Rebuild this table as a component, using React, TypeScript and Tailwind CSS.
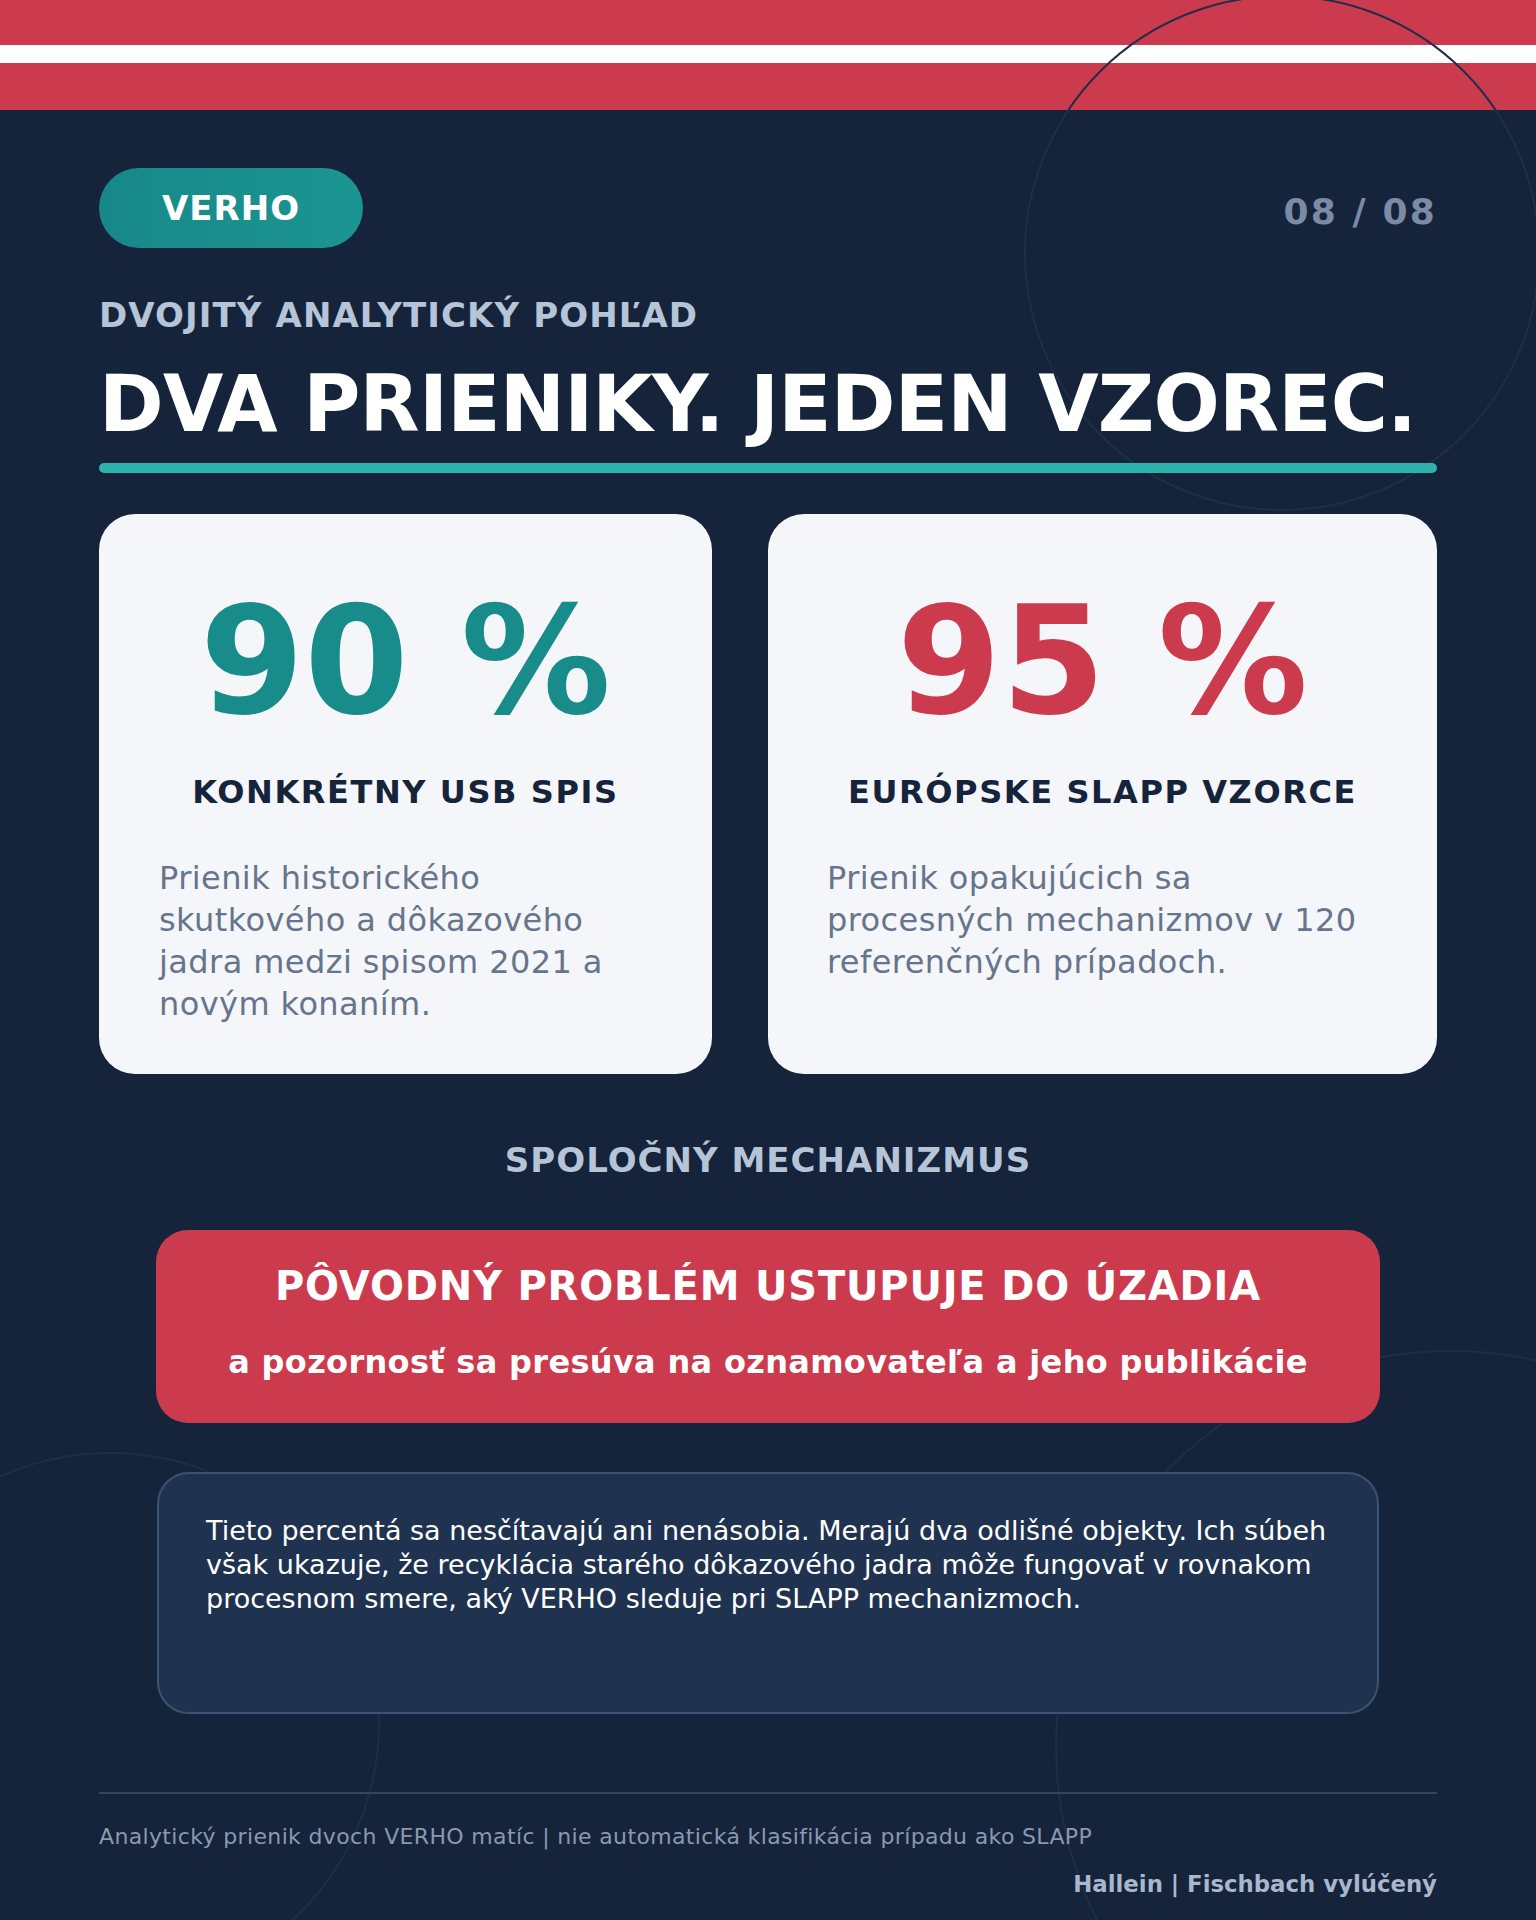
import React from "react";

export default function App() {
  return (
    <div
      className="relative w-[1536px] h-[1920px] overflow-hidden bg-[#15233b]"
      style={{ fontFamily: '"DejaVu Sans", Verdana, sans-serif' }}
    >
      {/* top band */}
      <div className="flex flex-col">
        <div className="h-[45px] bg-[#cc3b4d]" />
        <div className="h-[18px] bg-white" />
        <div className="h-[47px] bg-[#cc3b4d]" />
      </div>

      {/* decorative circles */}
      <div className="absolute left-[1024px] top-[-5px] w-[516px] h-[516px] rounded-full border-2 border-[#1f2e4a]" />
      <div className="absolute left-[-160px] top-[1452px] w-[540px] h-[540px] rounded-full border-2 border-[#1e2e46]" />
      <div className="absolute left-[1055px] top-[1350px] w-[790px] h-[790px] rounded-full border-2 border-[#1e2e46]" />

      <div className="relative px-[99px]">
        {/* header row */}
        <div className="mt-[58px] flex items-center justify-between">
          <div className="h-[80px] w-[264px] rounded-full bg-gradient-to-r from-[#178889] to-[#1b9592] flex items-center justify-center">
            <span className="text-white font-bold text-[34px] tracking-[0.03em] leading-none">VERHO</span>
          </div>
          <span className="pt-[8px] text-[#7b8ba6] font-bold text-[36px] tracking-[0.06em] leading-none">08 / 08</span>
        </div>

        <div className="mt-[47px] text-[#b6c4d8] font-bold text-[34px] leading-[1.2] tracking-[0.032em]">
          DVOJITÝ ANALYTICKÝ POHĽAD
        </div>
        <h1 className="mt-[26px] text-white font-bold text-[78px] leading-[1.1] tracking-[-0.01em] whitespace-nowrap">
          DVA PRIENIKY. JEDEN VZOREC.
        </h1>
        <div className="mt-[15px] h-[10px] rounded-full bg-[#2fb1ac]" />

        {/* cards */}
        <div className="mt-[41px] flex gap-[56px]">
          <div className="w-[613px] shrink-0 rounded-[36px] bg-[#f4f6fa] pt-[72px] pb-[49px] px-[60px]">
            <div className="text-center text-[#178c8a] font-bold text-[150px] leading-none">90 %</div>
            <div className="mt-[37px] text-center text-[#15233b] font-bold text-[32px] leading-[1.2] tracking-[0.05em] whitespace-nowrap">
              KONKRÉTNY USB SPIS
            </div>
            <p className="mt-[46px] text-[#66758c] text-[32px] leading-[42px] tracking-[0.013em]">
              Prienik historického skutkového a dôkazového jadra medzi spisom 2021 a novým konaním.
            </p>
          </div>
          <div className="flex-1 rounded-[36px] bg-[#f4f6fa] pt-[72px] pb-[49px] px-[59px]">
            <div className="text-center text-[#cc3b4d] font-bold text-[150px] leading-none">95 %</div>
            <div className="mt-[37px] text-center text-[#15233b] font-bold text-[32px] leading-[1.2] tracking-[0.05em] whitespace-nowrap">
              EURÓPSKE SLAPP VZORCE
            </div>
            <p className="mt-[46px] max-w-[549px] text-[#66758c] text-[32px] leading-[42px] tracking-[0.013em]">
              Prienik opakujúcich sa procesných mechanizmov v 120 referenčných prípadoch.
            </p>
          </div>
        </div>

        <div className="mt-[66px] text-center text-[#b6c4d8] font-bold text-[34px] leading-[1.2] tracking-[0.03em]">
          SPOLOČNÝ MECHANIZMUS
        </div>

        {/* red box */}
        <div className="mt-[49px] mx-[57px] h-[193px] rounded-[32px] bg-[#cc3b4d] pt-[32px] flex flex-col items-center">
          <div className="text-white font-bold text-[40px] leading-[1.2] tracking-[0.02em] whitespace-nowrap">
            PÔVODNÝ PROBLÉM USTUPUJE DO ÚZADIA
          </div>
          <div className="mt-[32px] text-white font-bold text-[32px] leading-[1.3] tracking-[0.01em] whitespace-nowrap">
            a pozornosť sa presúva na oznamovateľa a jeho publikácie
          </div>
        </div>

        {/* gray box */}
        <div className="mt-[49px] mx-[58px] h-[242px] rounded-[32px] bg-[#1f3350] border-2 border-[#3a5273] pt-[40px] pl-[47px] pr-[40px]">
          <p className="text-white text-[27px] leading-[34px]">
            Tieto percentá sa nesčítavajú ani nenásobia. Merajú dva odlišné objekty. Ich súbeh však ukazuje, že recyklácia starého dôkazového jadra môže fungovať v rovnakom procesnom smere, aký VERHO sleduje pri SLAPP mechanizmoch.
          </p>
        </div>

        {/* footer */}
        <div className="mt-[78px] border-t-2 border-[#33465f] pt-[29px]">
          <div className="text-[#8a99b0] text-[22px] leading-[1.3] tracking-[0.016em] whitespace-nowrap">
            Analytický prienik dvoch VERHO matíc | nie automatická klasifikácia prípadu ako SLAPP
          </div>
          <div className="mt-[19px] text-right text-[#a9b7cc] font-bold text-[22.8px] leading-[1.3]">
            Hallein | Fischbach vylúčený
          </div>
        </div>
      </div>
    </div>
  );
}
